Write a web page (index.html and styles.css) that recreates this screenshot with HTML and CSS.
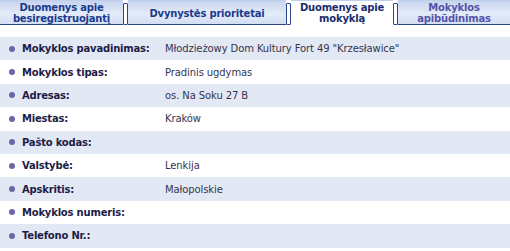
FILE: index.html
```html
<!DOCTYPE html>
<html lang="lt">
<head>
<meta charset="utf-8">
<link rel="stylesheet" href="styles.css">
</head>
<body>
<div class="tabs">
  <div class="tab t1">Duomenys apie<br>besiregistruojantį</div>
  <div class="sep"></div>
  <div class="tab t2">Dvynystės prioritetai</div>
  <div class="sep"></div>
  <div class="tab t3 active">Duomenys apie<br>mokyklą</div>
  <div class="sep"></div>
  <div class="tab t4 light">Mokyklos<br>apibūdinimas</div>
</div>
<div class="rows">
  <div class="row odd"><span class="dot"></span><span class="label">Mokyklos pavadinimas:</span><span class="value">Młodzieżowy Dom Kultury Fort 49 "Krzesławice"</span></div>
  <div class="row"><span class="dot"></span><span class="label">Mokyklos tipas:</span><span class="value">Pradinis ugdymas</span></div>
  <div class="row odd"><span class="dot"></span><span class="label">Adresas:</span><span class="value">os. Na Soku 27 B</span></div>
  <div class="row"><span class="dot"></span><span class="label">Miestas:</span><span class="value">Kraków</span></div>
  <div class="row odd"><span class="dot"></span><span class="label">Pašto kodas:</span><span class="value"></span></div>
  <div class="row"><span class="dot"></span><span class="label">Valstybė:</span><span class="value">Lenkija</span></div>
  <div class="row odd"><span class="dot"></span><span class="label">Apskritis:</span><span class="value">Małopolskie</span></div>
  <div class="row"><span class="dot"></span><span class="label">Mokyklos numeris:</span><span class="value"></span></div>
  <div class="row odd"><span class="dot"></span><span class="label">Telefono Nr.:</span><span class="value"></span></div>
</div>
</body>
</html>
```
FILE: styles.css
```css
html, body {
  margin: 0;
  padding: 0;
  background: #ffffff;
}
body {
  width: 510px;
  height: 251px;
  overflow: hidden;
  font-family: "DejaVu Sans", Verdana, sans-serif;
}
.tabs {
  display: flex;
  height: 25px;
  align-items: stretch;
}
.tab {
  box-sizing: border-box;
  display: flex;
  align-items: center;
  justify-content: center;
  text-align: center;
  font-size: 10px;
  font-weight: bold;
  line-height: 11px;
  color: #1b3a8c;
  background: linear-gradient(to bottom, #c6d5ef 0%, #e4ebf8 55%, #d2def2 100%);
  border-bottom: 1px solid #2b4687;
  border-top: 1px solid #c0cfea;
  padding-top: 1px;
  letter-spacing: -0.2px;
}
.t1 { width: 123px; }
.t2 { width: 158px; }
.t3 { width: 102px; }
.t4 { flex: 1; }
.tab.active {
  background: #ffffff;
  border-bottom-color: #ffffff;
  color: #1a2c6e;
}
.tab.light {
  color: #5653a9;
}
.sep {
  box-sizing: border-box;
  width: 5px;
  margin-top: 3px;
  height: 22px;
  background: #ffffff;
  border: 1px solid #2b4687;
  border-radius: 1px;
}
.rows {
  margin-top: 12px;
}
.row {
  display: flex;
  align-items: center;
  height: 23.4px;
  font-size: 10px;
}
.row.odd {
  background: #e2e8f4;
}
.dot {
  width: 6px;
  height: 6px;
  border-radius: 50%;
  background: #6a67a9;
  margin-left: 9px;
  margin-right: 7px;
  flex: none;
}
.label {
  width: 143px;
  font-weight: bold;
  color: #1d1c47;
  letter-spacing: -0.2px;
}
.value {
  color: #35354d;
  letter-spacing: -0.1px;
}
```
